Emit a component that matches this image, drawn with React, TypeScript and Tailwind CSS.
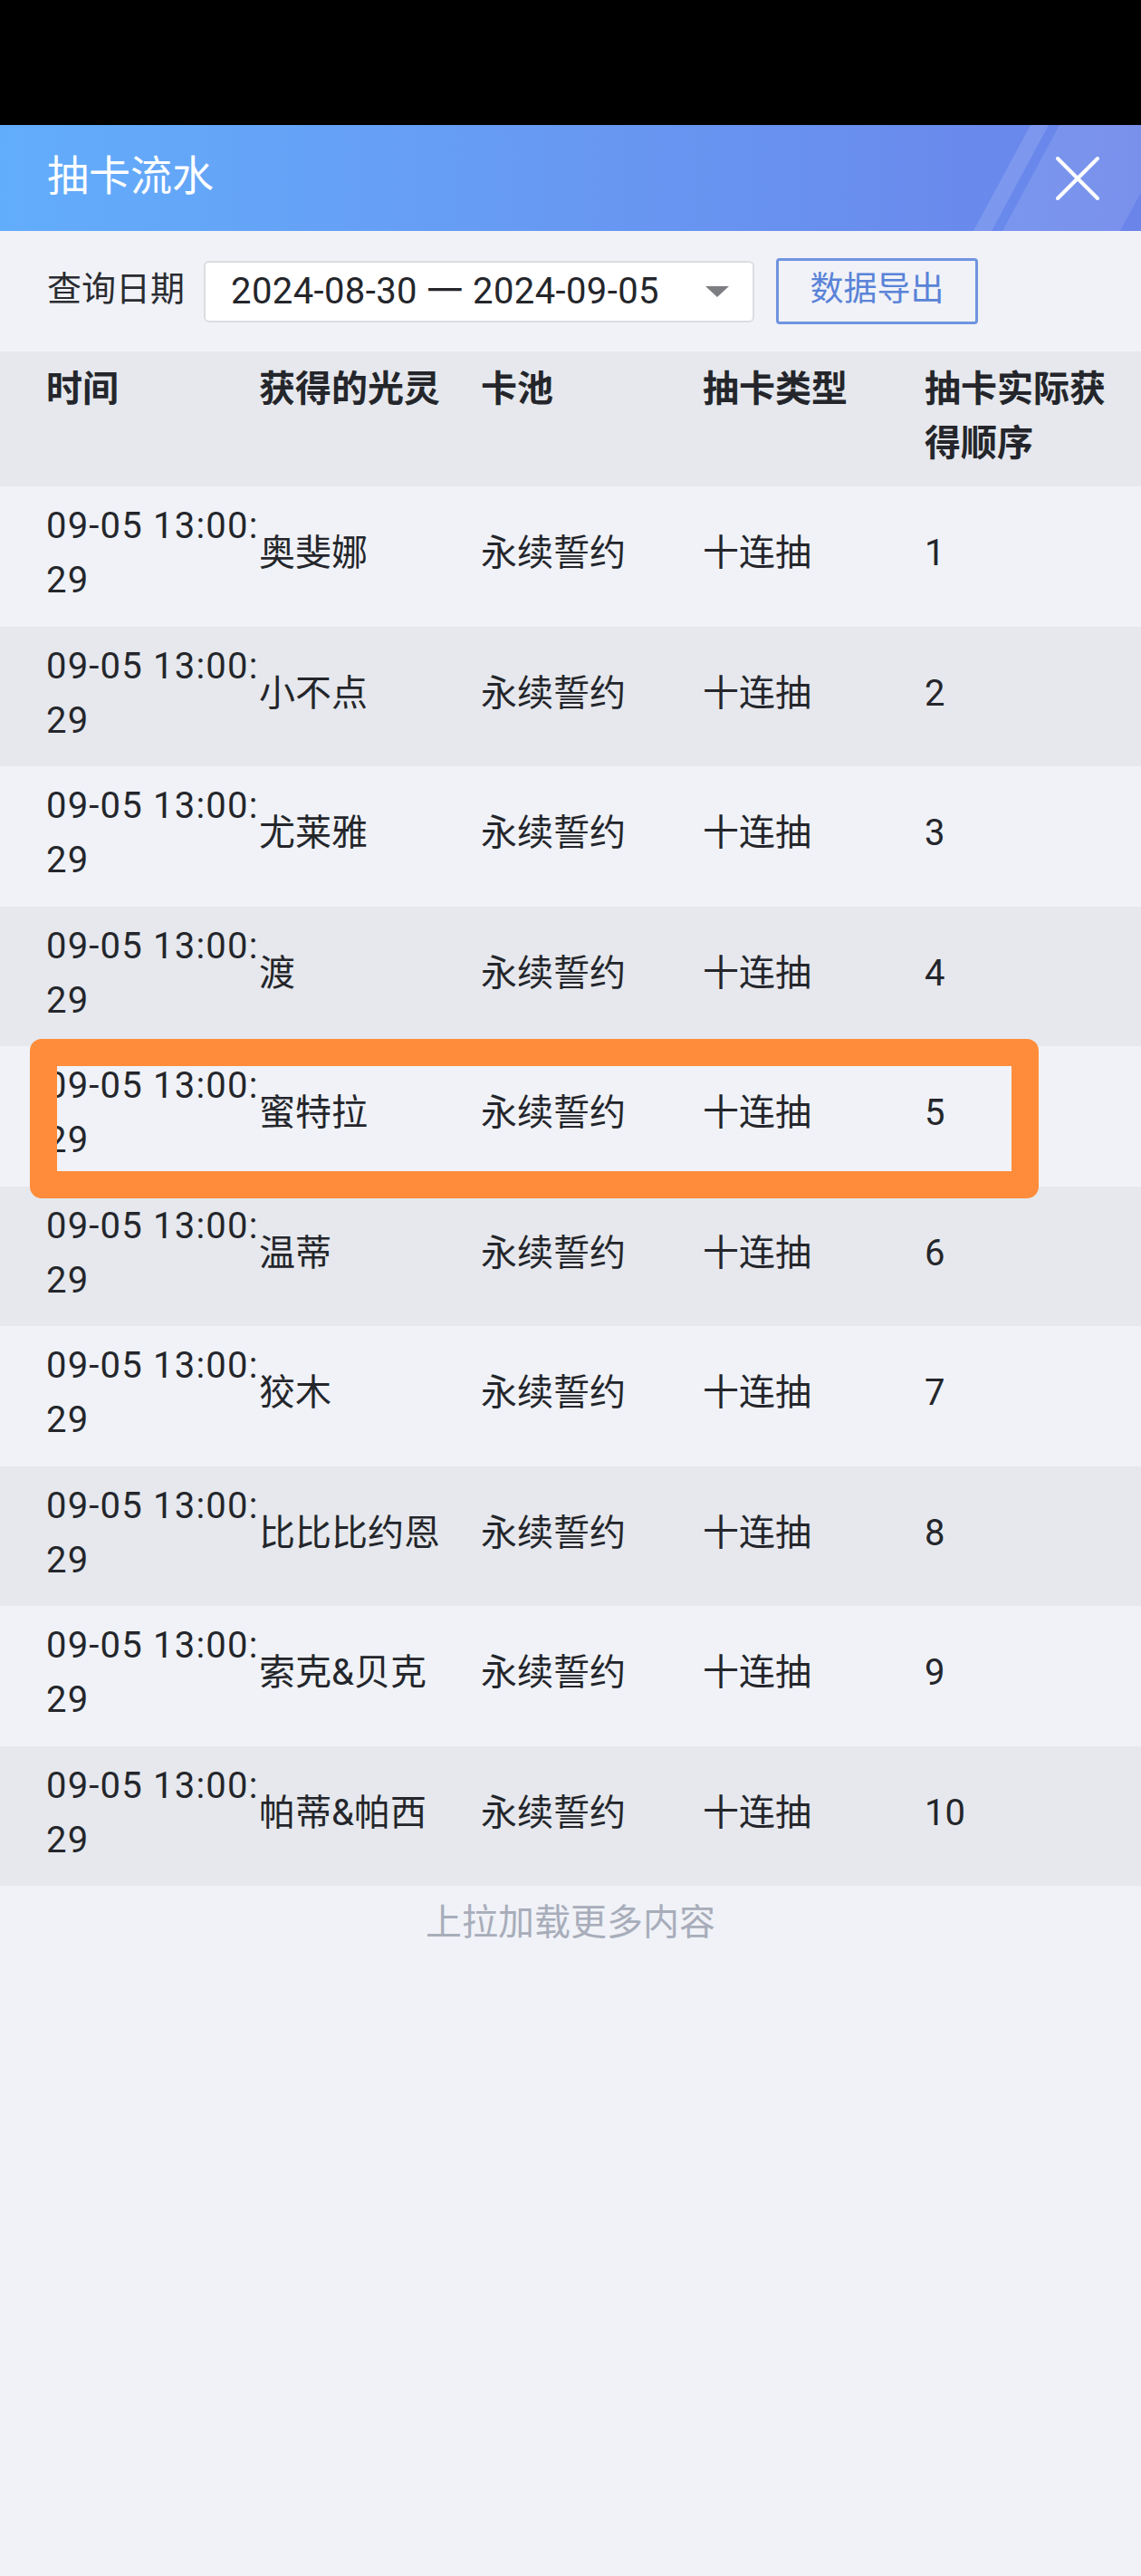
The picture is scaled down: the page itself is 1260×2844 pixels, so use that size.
import React from 'react';

const rows = [
  { name: '奥斐娜', order: '1' },
  { name: '小不点', order: '2' },
  { name: '尤莱雅', order: '3' },
  { name: '渡', order: '4' },
  { name: '蜜特拉', order: '5' },
  { name: '温蒂', order: '6' },
  { name: '狡木', order: '7' },
  { name: '比比比约恩', order: '8' },
  { name: '索克&贝克', order: '9' },
  { name: '帕蒂&帕西', order: '10' },
];

const font = { fontFamily: 'Roboto, "Noto Sans CJK SC", sans-serif' };

export default function App() {
  return (
    <div className="relative min-h-[2844px] w-[1260px] bg-[#f0f2f7] text-[#24262b]" style={font}>
      {/* status bar */}
      <div className="h-[138px] bg-black" />

      {/* title bar */}
      <div className="relative flex h-[117px] items-center bg-gradient-to-r from-[#62adfb] to-[#6a84ea] pl-[52px] pr-[46px]">
        <svg className="absolute inset-0 h-full w-full" viewBox="0 0 1260 117" preserveAspectRatio="none">
          <polygon points="1138,0 1158,0 1095,117 1075,117" fill="#ffffff" fillOpacity="0.13" />
          <polygon points="1170,0 1300,0 1237,117 1107,117" fill="#ffffff" fillOpacity="0.11" />
        </svg>
        <h1 className="relative mb-[6px] text-[46px] font-normal leading-none text-white">抽卡流水</h1>
        <button className="relative ml-auto flex h-[48px] w-[48px] items-center justify-center">
          <svg width="48" height="48" viewBox="0 0 48 48" fill="none" stroke="#ffffff" strokeWidth="4" strokeLinecap="round">
            <line x1="2" y1="2" x2="46" y2="46" />
            <line x1="46" y1="2" x2="2" y2="46" />
          </svg>
        </button>
      </div>

      {/* filter row */}
      <div className="flex h-[133px] items-center pl-[52px]">
        <span className="mb-[5px] w-[173px] text-[38px] leading-none text-[#2a2c31]">查询日期</span>
        <div className="flex h-[68px] w-[608px] items-center rounded-[6px] border-2 border-[#dcdde2] bg-white pl-[28px] pr-[26px]">
          <span className="text-[40px] leading-none tracking-[0.4px] text-[#24262b]">2024-08-30 一 2024-09-05</span>
          <span className="ml-auto h-0 w-0 border-x-[13px] border-t-[12px] border-x-transparent border-t-[#7d7e82]" />
        </div>
        <button className="ml-[24px] flex h-[73px] w-[223px] items-center justify-center rounded-[4px] border-[3px] border-[#6f94e0] pb-[5px] text-[37px] leading-none text-[#5a83d8]">
          数据导出
        </button>
      </div>

      {/* table header */}
      <div className="grid h-[149px] grid-cols-[235px_245px_245px_245px_1fr] bg-[#e6e8ed] pl-[51px] pt-[12px] text-[40px] font-bold leading-[60px]">
        <div>时间</div>
        <div>获得的光灵</div>
        <div>卡池</div>
        <div>抽卡类型</div>
        <div>
          抽卡实际获
          <br />
          得顺序
        </div>
      </div>

      {/* rows */}
      {rows.map((r, i) => (
        <div
          key={r.order}
          className={`grid h-[154.5px] grid-cols-[235px_245px_245px_245px_1fr] items-center pb-[6px] pl-[51px] text-[40px] leading-[60px] ${
            i % 2 === 0 ? 'bg-[#f0f2f7]' : 'bg-[#e6e8ed]'
          }`}
        >
          <div className="whitespace-nowrap tracking-[1.2px]">
            09-05 13:00:
            <br />
            29
          </div>
          <div className="whitespace-nowrap">{r.name}</div>
          <div>永续誓约</div>
          <div>十连抽</div>
          <div>{r.order}</div>
        </div>
      ))}

      <p className="pt-[11px] text-center text-[40px] leading-[60px] text-[#a8adba]">上拉加载更多内容</p>

      {/* highlight frame */}
      <div className="pointer-events-none absolute left-[33px] top-[1147px] h-[176px] w-[1114px] rounded-[13px] border-[30px] border-[#ff8c3a]" />
    </div>
  );
}
